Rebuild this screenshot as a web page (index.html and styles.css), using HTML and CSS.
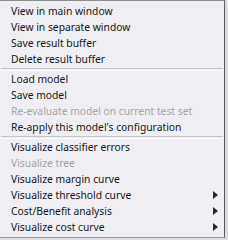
FILE: index.html
```html
<!DOCTYPE html>
<html lang="en">
<head>
	<meta charset="utf-8">
	<title>Result list menu</title>
	<link rel="stylesheet" href="styles.css">
</head>
<body>
	<div class="popMenu">
		<div class="item">View in main window</div>
		<div class="item">View in separate window</div>
		<div class="item">Save result buffer</div>
		<div class="item">Delete result buffer</div>
		<div class="sep"></div>
		<div class="item">Load model</div>
		<div class="item">Save model</div>
		<div class="item off">Re-evaluate model on current test set</div>
		<div class="item">Re-apply this model's configuration</div>
		<div class="sep"></div>
		<div class="item">Visualize classifier errors</div>
		<div class="item off">Visualize tree</div>
		<div class="item">Visualize margin curve</div>
		<div class="item sub">Visualize threshold curve</div>
		<div class="item sub">Cost/Benefit analysis</div>
		<div class="item sub">Visualize cost curve</div>
	</div>
</body>
</html>
```

FILE: styles.css
```css
*, *:after, *:before {
	box-sizing: border-box;
}
html, body {
	margin: 0;
	background: #dcdce2;
	font-family: "Noto Sans", sans-serif;
}
.popMenu {
	width: 225px;
	height: 238px;
	background: #efeff3;
	border-top: 1px solid #8e8e8e;
	border-right: 1px solid #5a5a5a;
	border-bottom: 1px solid #9a9a9a;
	padding: 2px 0 0 0;
}
.item {
	display: flex;
	align-items: center;
	justify-content: space-between;
	height: 16px;
	padding: 0 6px 0 11px;
	font-size: 10.3px;
	color: #161616;
	white-space: nowrap;
}
.off {
	color: #a4a4a8;
}
.sub:after {
	content: "";
	border-left: 5px solid #2a2a2a;
	border-top: 4px solid transparent;
	border-bottom: 4px solid transparent;
}
.sep {
	margin: 1px 1px 0 1px;
	height: 3px;
	border-top: 1px solid #c4c4c8;
	border-bottom: 1px solid #fafafc;
}
```
